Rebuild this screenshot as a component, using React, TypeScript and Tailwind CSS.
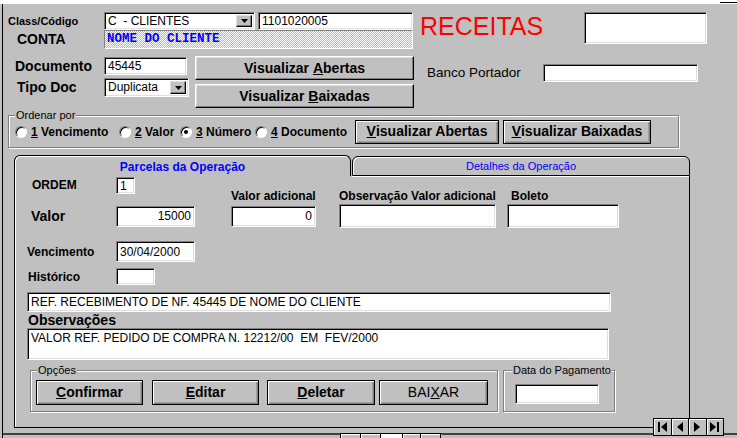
import type { ReactNode } from "react";

const sunken =
  "bg-white border border-t-[#808080] border-l-[#808080] border-r-white border-b-white shadow-[inset_1px_1px_0_#000,inset_-1px_-1px_0_#dfdfdf]";

const Field = ({
  cls = "",
  children,
  right,
  top,
}: {
  cls?: string;
  children?: ReactNode;
  right?: boolean;
  top?: boolean;
}) => (
  <div
    className={`${sunken} flex overflow-hidden whitespace-pre px-[3px] text-[12px] ${top ? "items-start pt-[2px] leading-[14px]" : "items-center"} ${right ? "justify-end" : ""} ${cls}`}
  >
    {children}
  </div>
);

const Arrow = () => (
  <svg width="7" height="4" viewBox="0 0 7 4">
    <polygon points="0,0 7,0 3.5,4" fill="#000" />
  </svg>
);

const Select = ({ cls, text }: { cls: string; text: string }) => (
  <div className={`${sunken} flex p-[2px] ${cls}`}>
    <span className="flex-1 whitespace-pre pl-[1px] text-[12px] leading-[13px]">{text}</span>
    <div className="flex w-[16px] items-center justify-center border border-t-[#dfdfdf] border-l-[#dfdfdf] border-r-black border-b-black bg-[#c0c0c0] shadow-[inset_-1px_-1px_0_#808080]">
      <Arrow />
    </div>
  </div>
);

const Btn = ({ cls, black, children }: { cls: string; black?: boolean; children: ReactNode }) => (
  <div
    className={`flex items-center justify-center bg-[#c0c0c0] whitespace-pre ${
      black
        ? "border border-black shadow-[inset_1px_1px_0_#fff,inset_-1px_-1px_0_#808080,inset_-2px_-2px_0_#a0a0a0]"
        : "border border-t-white border-l-white border-r-black border-b-black shadow-[inset_-1px_-1px_0_#808080,inset_1px_1px_0_#dfdfdf]"
    } ${cls}`}
  >
    {children}
  </div>
);

const Radio = ({ w, num, label, checked }: { w: string; num: string; label: string; checked?: boolean }) => (
  <div className={`flex items-center ${w}`}>
    <span className="flex h-[12px] w-[12px] items-center justify-center rounded-full border border-t-[#808080] border-l-[#808080] border-r-white border-b-white bg-white shadow-[inset_1px_1px_0_#000]">
      {checked && <span className="h-[4px] w-[4px] rounded-full bg-black" />}
    </span>
    <span className="ml-[4px] text-[12px] font-bold">
      <u>{num}</u> {label}
    </span>
  </div>
);

const groupBox = "relative border border-[#808080] shadow-[inset_1px_1px_0_#fff,1px_1px_0_#fff]";

const legend = "absolute -top-[7px] bg-[#c0c0c0] px-[1px] text-[11px] leading-[12px]";

const navCell =
  "flex flex-1 items-center justify-center border-l border-black first:border-l-0 shadow-[inset_1px_1px_0_#fff]";

export default function App() {
  return (
    <div className="relative h-[438px] w-[737px] overflow-hidden bg-[#c0c0c0] font-['Liberation_Sans',Arial,sans-serif] text-black">
      <div className="flex h-[4px] justify-end bg-white">
        <div className="mt-[2px] h-[1px] w-[17px] bg-black" />
      </div>

      <div className="ml-[2px] flex h-[434px] flex-col border-l border-black">
        {/* cabeçalho */}
        <div className="mt-[8px] flex">
          <div className="flex w-[411px] flex-col">
            <div className="flex h-[18px]">
              <div className="w-[101px] pl-[5px] text-[11px] font-bold leading-[18px]">Class/Código</div>
              <Select cls="w-[151px] h-[18px]" text="C  - CLIENTES" />
              <Field cls="ml-[3px] w-[155px] h-[18px]">1101020005</Field>
            </div>
            <div className="flex h-[19px]">
              <div className="w-[101px] pl-[14px] text-[14px] font-bold leading-[19px]">CONTA</div>
              <div className="flex h-[19px] w-[309px] items-center border border-t-[#808080] border-l-[#808080] border-r-white border-b-white bg-[image:repeating-conic-gradient(#b8b8b8_0_25%,#ffffff_0_50%)] bg-size-[2px_2px] bg-[length:2px_2px] pl-[2px] font-['Liberation_Mono',monospace] text-[12.5px] font-bold text-[#0000ff]">
                NOME DO CLIENTE
              </div>
            </div>
          </div>
          <div className="ml-[6px] mt-[2px] w-[164px] text-[25px] leading-[25px] text-[#ff0000]">RECEITAS</div>
          <Field cls="w-[123px] h-[32px]" />
        </div>

        <div className="mt-[7px] flex">
          <div className="flex w-[192px] flex-col">
            <div className="mt-[1px] flex h-[18px]">
              <div className="w-[101px] pl-[12px] text-[14px] font-bold leading-[18px]">Documento</div>
              <Field cls="w-[83px] h-[18px]">45445</Field>
            </div>
            <div className="mt-[3px] flex h-[19px]">
              <div className="w-[101px] pl-[14px] text-[14px] font-bold leading-[19px]">Tipo Doc</div>
              <Select cls="w-[85px] h-[19px]" text="Duplicata" />
            </div>
          </div>
          <div className="flex w-[219px] flex-col">
            <Btn cls="h-[24px] text-[14px] font-bold">
              Visualizar <u>A</u>bertas
            </Btn>
            <Btn cls="mt-[4px] h-[24px] text-[14px] font-bold">
              Visualizar <u>B</u>aixadas
            </Btn>
          </div>
          <div className="ml-[13px] mt-[8px] flex h-[18px]">
            <div className="w-[116px] text-[13.5px] leading-[18px]">Banco Portador</div>
            <Field cls="w-[155px] h-[18px]" />
          </div>
        </div>

        {/* ordenar */}
        <div className={`${groupBox} ml-[5px] mt-[7px] flex h-[33px] w-[671px] items-center pl-[6px]`}>
          <span className={`${legend} left-[6px]`}>Ordenar por</span>
          <Radio w="w-[104px]" num="1" label="Vencimento" />
          <Radio w="w-[61px]" num="2" label="Valor" />
          <Radio w="w-[75px]" num="3" label="Número" checked />
          <Radio w="w-[100px]" num="4" label="Documento" />
          <Btn black cls="h-[24px] w-[144px] text-[14px] font-bold">
            <u>V</u>isualizar Abertas
          </Btn>
          <Btn black cls="ml-[4px] h-[24px] w-[148px] text-[14px] font-bold">
            <u>V</u>isualizar Baixadas
          </Btn>
        </div>

        {/* abas */}
        <div className="ml-[11px] mt-[7px] flex w-[676px] flex-col">
          <div className="flex h-[21px] items-end">
            <div className="flex h-[21px] w-[337px] items-center justify-center rounded-t-[6px] border border-b-0 border-black pt-[2px] text-[12px] font-bold text-[#0000ff] shadow-[inset_1px_1px_0_#fff]">
              Parcelas da Operação
            </div>
            <div className="ml-[1px] flex h-[20px] w-[338px] items-center justify-center rounded-t-[6px] border border-black text-[11px] text-[#0000ff] shadow-[inset_1px_1px_0_#fff,0_1px_0_#fff]">
              Detalhes da Operação
            </div>
          </div>

          <div className="flex h-[252px] flex-col border-x border-b border-black shadow-[inset_1px_0_0_#fff]">
            <div className="mt-[1px] flex h-[27px]">
              <div className="flex h-[17px]">
                <div className="w-[101px] pl-[17px] text-[12px] font-bold leading-[17px]">ORDEM</div>
                <Field cls="w-[19px] h-[17px]">1</Field>
              </div>
              <div className="mb-[1px] ml-[96px] w-[108px] self-end text-[12px] font-bold leading-[14px]">Valor adicional</div>
              <div className="mb-[1px] w-[168px] self-end text-[12px] font-bold leading-[14px]">Observação Valor adicional</div>
              <div className="mb-[1px] self-end pl-[4px] text-[12px] font-bold leading-[14px]">Boleto</div>
            </div>

            <div className="flex h-[24px] items-center">
              <div className="w-[101px] pl-[16px] text-[14px] font-bold">Valor</div>
              <Field right cls="w-[79px] h-[21px]">15000</Field>
              <Field right cls="ml-[36px] w-[85px] h-[21px]">0</Field>
              <Field cls="ml-[23px] w-[157px] h-[24px]" />
              <Field cls="ml-[11px] w-[112px] h-[24px]" />
            </div>

            <div className="mt-[13px] flex h-[21px] items-center">
              <div className="w-[101px] pl-[12px] text-[12px] font-bold">Vencimento</div>
              <Field cls="w-[79px] h-[21px]">30/04/2000</Field>
            </div>

            <div className="mt-[6px] flex h-[17px] items-center">
              <div className="w-[101px] pl-[13px] text-[12px] font-bold">Histórico</div>
              <Field cls="w-[39px] h-[17px]" />
            </div>

            <Field cls="ml-[12px] mt-[7px] w-[584px] h-[20px]">REF. RECEBIMENTO DE NF. 45445 DE NOME DO CLIENTE</Field>

            <div className="ml-[13px] h-[16px] text-[14px] font-bold leading-[16px]">Observações</div>

            <Field top cls="ml-[12px] w-[582px] h-[32px]">VALOR REF. PEDIDO DE COMPRA N. 12212/00  EM  FEV/2000</Field>

            <div className="mt-[10px] flex">
              <div className={`${groupBox} ml-[15px] flex h-[42px] w-[468px] pl-[5px] pt-[9px]`}>
                <span className={`${legend} left-[6px]`}>Opções</span>
                <Btn black cls="h-[25px] w-[107px] text-[14px] font-bold">
                  <u>C</u>onfirmar
                </Btn>
                <Btn black cls="ml-[9px] h-[25px] w-[107px] text-[14px] font-bold">
                  <u>E</u>ditar
                </Btn>
                <Btn black cls="ml-[8px] h-[25px] w-[108px] text-[14px] font-bold">
                  <u>D</u>eletar
                </Btn>
                <Btn black cls="ml-[4px] h-[25px] w-[109px] text-[14px]">
                  BAI<u>X</u>AR
                </Btn>
              </div>
              <div className={`${groupBox} ml-[5px] flex h-[42px] w-[112px] pl-[11px] pt-[13px]`}>
                <span className={`${legend} left-[8px]`}>Data do Pagamento</span>
                <Field cls="w-[84px] h-[20px]" />
              </div>
            </div>
          </div>
        </div>

        {/* barra de registros */}
        <div className="mt-[5px] flex h-[5px]">
          <div className="h-[2px] w-[337px] bg-[#404040]" />
          <div className="flex h-[5px] w-[102px] border-l border-t border-black">
            <div className="w-[20px] border-r border-black bg-[#c0c0c0] shadow-[inset_1px_1px_0_#fff]" />
            <div className="w-[20px] border-r border-black bg-[#c0c0c0] shadow-[inset_1px_1px_0_#fff]" />
            <div className="w-[22px] border-r border-black bg-white" />
            <div className="w-[18px] border-r border-black bg-[#c0c0c0] shadow-[inset_1px_1px_0_#fff]" />
            <div className="w-[20px] border-r border-black bg-[#c0c0c0] shadow-[inset_1px_1px_0_#fff]" />
          </div>
          <div className="h-[2px] flex-1 bg-[#404040]" />
        </div>
      </div>

      {/* navegador */}
      <div className="absolute left-[653px] top-[418px] flex h-[18px] w-[71px] border border-black bg-[#c0c0c0]">
        <div className={navCell}>
          <svg width="9" height="10" viewBox="0 0 9 10">
            <rect x="0" y="0" width="2" height="10" fill="#000" />
            <polygon points="9,0 3,5 9,10" fill="#000" />
          </svg>
        </div>
        <div className={navCell}>
          <svg width="6" height="10" viewBox="0 0 6 10">
            <polygon points="6,0 0,5 6,10" fill="#000" />
          </svg>
        </div>
        <div className={navCell}>
          <svg width="6" height="10" viewBox="0 0 6 10">
            <polygon points="0,0 6,5 0,10" fill="#000" />
          </svg>
        </div>
        <div className={navCell}>
          <svg width="9" height="10" viewBox="0 0 9 10">
            <polygon points="0,0 6,5 0,10" fill="#000" />
            <rect x="7" y="0" width="2" height="10" fill="#000" />
          </svg>
        </div>
      </div>
    </div>
  );
}
